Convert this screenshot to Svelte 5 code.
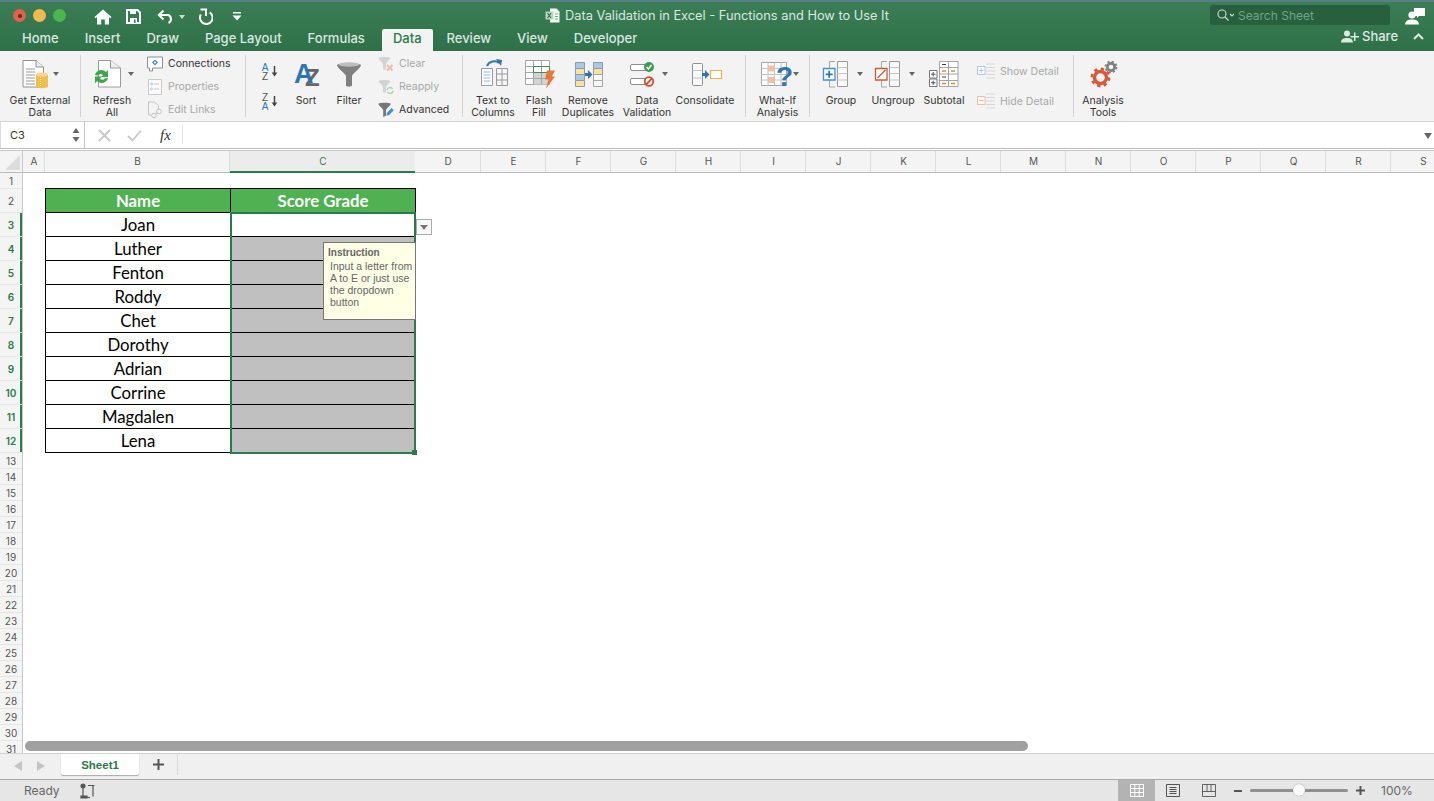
<script>
	const tabs = ['Home', 'Insert', 'Draw', 'Page Layout', 'Formulas', 'Data', 'Review', 'View', 'Developer'];
	const columns = ['A', 'B', 'C', 'D', 'E', 'F', 'G', 'H', 'I', 'J', 'K', 'L', 'M', 'N', 'O', 'P', 'Q', 'R', 'S'];
	const names = ['Joan', 'Luther', 'Fenton', 'Roddy', 'Chet', 'Dorothy', 'Adrian', 'Corrine', 'Magdalen', 'Lena'];
	const rows = Array.from({ length: 31 }, (_, i) => i + 1);
</script>

<div class="window">
	<header class="titlebar">
		<div class="title-row">
			<div class="lights">
				<span class="light red"><i></i></span>
				<span class="light orange"></span>
				<span class="light green"></span>
			</div>
			<div class="quick">
				<svg class="q-home" width="18" height="16" viewBox="0 0 18 16" fill="#fff"><path d="M9 .5 17.500 8l-1.200 1.200L15 8.100V15.500h-4.200v-5H7.200v5H3V8.100L1.700 9.200.5 8z"/></svg>
				<svg class="q-save" width="15" height="15" viewBox="0 0 15 15"><path d="M1 1h10.500L14 3.500V14H1z" fill="none" stroke="#fff" stroke-width="2"/><path d="M4 1h6v4H4zM4 9h7v5H4z" fill="#fff"/><path d="M8 10.500h1.500V14H8z" fill="#2f7349"/></svg>
				<svg class="q-undo" width="18" height="15" viewBox="0 0 18 15" fill="none" stroke="#fff" stroke-width="2"><path d="M6.500 1.500 1.800 6l4.700 4.500M2 6h9.500a4.500 4.500 0 0 1 0 8"/></svg>
				<span class="q-caret"></span>
				<svg class="q-redo" width="16" height="17" viewBox="0 0 16 17" fill="none" stroke="#fff" stroke-width="2"><path d="M3.800 6.500a6.300 6.300 0 1 0 8.900-2.200"/><path d="M3.500 1.500h5.500v6.500"/></svg>
				<svg class="q-more" width="10" height="9" viewBox="0 0 10 9" fill="#fff"><path d="M1 0h8v1.500H1zM.5 3.500h9L5 8.500z"/></svg>
			</div>
			<div class="doc-title">
				<svg width="15" height="15" viewBox="0 0 15 15"><path d="M5 .5h6.500L14.500 3.500v11H5z" fill="#f4f8f5"/><path d="M.5 3.500h8v8h-8z" fill="#b9d6c3"/><path d="M2.500 5l3.500 5M6 5l-3.500 5" stroke="#2f7349" stroke-width="1.200"/><path d="M10 6h3M10 8.500h3M10 11h3" stroke="#7ba58a"/></svg>
				<span>Data Validation in Excel - Functions and How to Use It</span>
			</div>
			<div class="search">
				<svg width="17" height="12" viewBox="0 0 17 12" fill="none" stroke="#cfe0d5" stroke-width="1.100"><circle cx="5" cy="5" r="4"/><path d="m8 8 3.500 3.500M13 5l2 2 2-2"/></svg>
				<span>Search Sheet</span>
			</div>
			<svg class="profile" width="20" height="19" viewBox="0 0 20 19" fill="#fff"><path d="M9 2h11v8h-6l-2 2v-2H9z"/><circle cx="7" cy="9" r="3.600"/><path d="M0 18.500c.5-4 3-5 7-5s6.500 1 7 5z"/></svg>
		</div>
		<nav class="tab-row">
			{#each tabs as tab}
				<span class="tab" class:active={tab === 'Data'}>{tab}</span>
			{/each}
			<div class="share">
				<svg width="18" height="13" viewBox="0 0 18 13" fill="#dfe9e3"><circle cx="6" cy="3.500" r="3"/><path d="M0 12.500c.3-3.500 2.500-4.500 6-4.500s5.700 1 6 4.500zM13 2.500h1.500V6H18v1.500h-3.500V11H13V7.500H9.500V6H13z"/></svg>
				<span>Share</span>
				<svg class="chev" width="11" height="7" viewBox="0 0 11 7" fill="none" stroke="#dfe9e3" stroke-width="2"><path d="m1 6 4.500-4.500L10 6"/></svg>
			</div>
		</nav>
	</header>

	<section class="ribbon">
		<div class="group g1">
			<div class="tool w80">
				<svg width="40" height="32" viewBox="0 0 40 32"><path d="M3 2.500h13L23.500 9v20H3z" fill="#fff" stroke="#8f8f8f"/><path d="M16 2.500V9h7.500" fill="#eee" stroke="#8f8f8f"/><path d="M6 11h9M6 14h9M6 17h9M6 20h9M6 23h9M6 26h9" stroke="#9a9a9a"/><path d="M16 16.500h12v12.500c-2 1.500-10 1.500-12 0z" fill="#f3bd4c"/><ellipse cx="22" cy="16.500" rx="6" ry="2" fill="#f9d88e"/><path d="M20.500 19v9" stroke="#fdeec8" stroke-dasharray="1 1"/><path d="m33 14 3 4 3-4z" fill="#666"/></svg>
				<span class="lbl">Get External<br />Data</span>
			</div>
		</div>

		<div class="group g2">
			<div class="tool w62">
				<svg width="50" height="32" viewBox="0 0 50 32"><path d="M11.500 2.500h12L33.500 10v19h-22z" fill="#fff" stroke="#9a9a9a"/><path d="M23.500 2.500V10h10" fill="#f0f0f0" stroke="#9a9a9a"/><path d="M8 17a6.500 6.500 0 0 1 11-3l2-2v7h-7l2-2a3.500 3.500 0 0 0-5 .5z" fill="#3fa54a"/><path d="M21 20a6.500 6.500 0 0 1-11 3l-2 2.500V18.500h7l-2 2.200a3.500 3.500 0 0 0 5-.5z" fill="#3fa54a"/><path d="m41 14 3 4 3-4z" fill="#666"/></svg>
				<span class="lbl">Refresh<br />All</span>
			</div>
			<div class="list">
				<div class="item">
					<svg width="16" height="16" viewBox="0 0 16 16"><path d="M.5 1h15v11H5.500v3h-3v-3H.5z" fill="#fff" stroke="#8f8f8f"/><path d="m8 3.500 3 3-3 3-3-3z" fill="#3f8ed6"/><circle cx="8" cy="6.500" r="1" fill="#fff"/></svg>
					<span>Connections</span>
				</div>
				<div class="item off">
					<svg width="16" height="16" viewBox="0 0 16 16" fill="none" stroke="#c9c9c9"><path d="M1.500.5h13v15h-13z" fill="#fafafa"/><path d="M7 5h5M7 10h5"/><circle cx="4.500" cy="5" r="1" stroke="#a9c8e6"/><circle cx="4.500" cy="10" r="1"/></svg>
					<span>Properties</span>
				</div>
				<div class="item off">
					<svg width="16" height="18" viewBox="0 0 16 18" fill="none" stroke="#c4c4c4"><path d="M1.500 1h6l4 4v4M1.500 1v13h3"/><circle cx="7" cy="14.500" r="2.300"/><circle cx="12" cy="10.500" r="2.300"/><path d="m8.500 13 2-1.500"/></svg>
					<span>Edit Links</span>
				</div>
			</div>
		</div>

		<div class="group g3">
			<div class="az">
				<svg width="24" height="22" viewBox="0 0 24 22"><text x="9" y="10" class="az-a">A</text><text x="9" y="19" class="az-z">Z</text><path d="M18.500 5v8" stroke="#444" stroke-width="1.500"/><path d="m15.700 11.500 2.800 4 2.800-4z" fill="#444"/></svg>
				<svg width="24" height="22" viewBox="0 0 24 22"><text x="9" y="10" class="az-z">Z</text><text x="9" y="19" class="az-a">A</text><path d="M18.500 5v8" stroke="#444" stroke-width="1.500"/><path d="m15.700 11.500 2.800 4 2.800-4z" fill="#444"/></svg>
			</div>
			<div class="tool w44">
				<svg width="40" height="32" viewBox="0 0 40 32"><text x="19" y="28" class="sort-z">Z</text><text x="8" y="25" class="sort-a">A</text></svg>
				<span class="lbl">Sort</span>
			</div>
			<div class="tool w42">
				<svg width="40" height="32" viewBox="0 0 40 32"><path d="M8 7c0-2.500 24-2.500 24 0 0 3-8 8-9 11v9.500c0 1.500-6 1.500-6 0V18c-1-3-9-8-9-11z" fill="#808080"/><ellipse cx="20" cy="6.500" rx="10.500" ry="2.200" fill="#bdbdbd"/></svg>
				<span class="lbl">Filter</span>
			</div>
			<div class="list l3">
				<div class="item off">
					<svg width="16" height="16" viewBox="0 0 16 16"><path d="M.5 2c0-1.500 12-1.500 12 0 0 1.500-4 4-4.500 6v5.500h-3V8C4.500 6 .5 3.500.5 2z" fill="#d3d3d3"/><path d="m9 9 5.500 5.500M14.500 9 9 14.500" stroke="#eeb9a8" stroke-width="1.800"/></svg>
					<span>Clear</span>
				</div>
				<div class="item off">
					<svg width="16" height="16" viewBox="0 0 16 16"><path d="M.5 2c0-1.500 12-1.500 12 0 0 1.500-4 4-4.500 6v5.500h-3V8C4.500 6 .5 3.500.5 2z" fill="#d3d3d3"/><path d="M9 11a3 3 0 0 1 5.500-1M15 12a3 3 0 0 1-5.500 1" fill="none" stroke="#a5d3ab" stroke-width="1.400"/></svg>
					<span>Reapply</span>
				</div>
				<div class="item">
					<svg width="16" height="18" viewBox="0 0 17 18"><path d="M.5 2.500c0-1.500 13-1.500 13 0 0 1.500-4.500 4.500-5 6.500v6l-3 1.500V9C5 7 .5 4 .5 2.500z" fill="#777"/><path d="m9 15 .5-3 5-5 2.300 2.300-5 5z" fill="#3f8ed6"/></svg>
					<span>Advanced</span>
				</div>
			</div>
		</div>

		<div class="group g4">
			<div class="tool w60">
				<svg width="40" height="32" viewBox="0 0 40 32"><path d="M8.500 10.500h11v17h-11z" fill="#fff" stroke="#9a9a9a"/><path d="M10.500 14h7M10.500 17h7M10.500 20h7M10.500 23h7" stroke="#8fbbe6"/><path d="M23.500 10.500h11v17h-11zM23.500 16h11M23.500 22h11M29 10.500v17" fill="#f6f6f6" stroke="#9a9a9a"/><path d="M14 8c2-5 9-6 12-3" fill="none" stroke="#2e75b6" stroke-width="2"/><path d="m23 1 6 1-1 6z" fill="#2e75b6"/></svg>
				<span class="lbl">Text to<br />Columns</span>
			</div>
			<div class="tool w32">
				<svg width="40" height="32" viewBox="0 0 40 32"><path d="M6.500 2.500h24v24h-24z" fill="#fff" stroke="#a5a5a5"/><path d="M14.500 14.500h16v12h-16z" fill="#d4d4d4"/><path d="M6.500 8.500h24M6.500 14.500h24M6.500 20.500h24M14.500 2.500v24M22.500 2.500v24" stroke="#a5a5a5"/><path d="M14.500 8.500h16v6h-16z" fill="none" stroke="#3f8f58"/><path d="m28 12.500h8l-3 6h3l-9 12 2.500-9H26z" fill="#e8763a"/></svg>
				<span class="lbl">Flash<br />Fill</span>
			</div>
			<div class="tool w66">
				<svg width="40" height="32" viewBox="0 0 40 32"><path d="M7.500 4.500h9v6h-9z" fill="#a6c8ea" stroke="#8f9aa5"/><path d="M7.500 10.500h9v6h-9z" fill="#fbe1a0" stroke="#8f9aa5"/><path d="M7.500 16.500h9v6h-9z" fill="#a6c8ea" stroke="#8f9aa5"/><path d="M7.500 22.500h9v6h-9z" fill="#fbe1a0" stroke="#8f9aa5"/><path d="M25.500 4.500h9v6h-9z" fill="#a6c8ea" stroke="#8f9aa5"/><path d="M25.500 10.500h9v6h-9z" fill="#fbe1a0" stroke="#8f9aa5"/><path d="M25.500 16.500h9v6h-9zM25.500 22.500h9v6h-9z" fill="#f8f8f8" stroke="#a5a5a5"/><path d="M17 15h3v-3l4.500 4.500L20 21v-3h-3z" fill="#2e75b6"/></svg>
				<span class="lbl">Remove<br />Duplicates</span>
			</div>
			<div class="tool w52">
				<svg width="50" height="32" viewBox="0 0 50 32"><rect x="8.500" y="6.500" width="17" height="6" rx="1.500" fill="#fff" stroke="#8f8f8f"/><rect x="8.500" y="20.500" width="17" height="6" rx="1.500" fill="#fff" stroke="#8f8f8f"/><circle cx="27" cy="9" r="5" fill="#3c9a52"/><path d="m24.500 9 2 2 3-4" fill="none" stroke="#fff" stroke-width="1.400"/><circle cx="27" cy="23.500" r="4.300" fill="#fff" stroke="#c9512e" stroke-width="1.800"/><path d="m24 26.500 6-6" stroke="#c9512e" stroke-width="1.800"/><path d="m40 14 3 4 3-4z" fill="#666"/></svg>
				<span class="lbl">Data<br />Validation</span>
			</div>
			<div class="tool w64">
				<svg width="40" height="32" viewBox="0 0 40 32"><rect x="7.500" y="5.500" width="10" height="22" rx="1" fill="#fafafa" stroke="#8f8f8f"/><path d="M7.500 12.500h10M7.500 20h10" stroke="#c4c4c4"/><path d="M17 15h3v-3l4.500 4.500L20 21v-3h-3z" fill="#2e75b6"/><path d="M25.500 12.500h11v8h-11z" fill="#fffdf5" stroke="#eeb04a" stroke-width="1.200"/></svg>
				<span class="lbl">Consolidate</span>
			</div>
		</div>

		<div class="group g5">
			<div class="tool w63">
				<svg width="50" height="32" viewBox="0 0 50 32"><path d="M8.500 4.500h25v23h-25z" fill="#fff" stroke="#a5a5a5"/><path d="M8.500 10.500h25M8.500 16.500h25M8.500 22h25M15 4.500v23M21.500 4.500v23M28 4.500v23" stroke="#c4c4c4"/><path d="M15 7.500h6.500v6H15zM15 19h6.500v6H15z" fill="#f2bfa2"/><text x="23" y="28" class="qmark">?</text><path d="m40 14 3 4 3-4z" fill="#666"/></svg>
				<span class="lbl">What-If<br />Analysis</span>
			</div>
		</div>

		<div class="group g6">
			<div class="tool w62">
				<svg width="50" height="32" viewBox="0 0 50 32"><path d="M19 3.500h-5.500v7M13.500 22v7H19" fill="none" stroke="#a5a5a5"/><path d="M21.500 3.500h10v25h-10z" fill="#fafafa" stroke="#9a9a9a"/><path d="M21.500 9.500h10M21.500 15.500h10M21.500 22h10" stroke="#c4c4c4"/><path d="M7.500 10.500h11.500v11.500H7.500z" fill="#fff" stroke="#3f8ed6" stroke-width="1.300"/><path d="M13.200 12.800v7M9.700 16.300h7" stroke="#2e75b6" stroke-width="1.800"/><path d="m41 14 3 4 3-4z" fill="#666"/></svg>
				<span class="lbl">Group</span>
			</div>
			<div class="tool w42">
				<svg width="50" height="32" viewBox="0 0 50 32"><path d="M19 3.500h-5.500v7M13.500 22v7H19" fill="none" stroke="#a5a5a5"/><path d="M21.500 3.500h10v25h-10z" fill="#fafafa" stroke="#9a9a9a"/><path d="M21.500 9.500h10M21.500 15.500h10M21.500 22h10" stroke="#c4c4c4"/><path d="M7.500 10.500h11.500v11.500H7.500z" fill="#fff" stroke="#cb5a3c" stroke-width="1.300"/><path d="m9.500 20 8-8" stroke="#cb5a3c" stroke-width="1.300"/><path d="m41 14 3 4 3-4z" fill="#666"/></svg>
				<span class="lbl">Ungroup</span>
			</div>
			<div class="tool w60">
				<svg width="40" height="32" viewBox="0 0 40 32"><path d="M15.500 3.500h18.500v25H15.500zM15.500 9.500H34M15.500 16H34M15.500 22.500H34M24.500 3.500v25" fill="#fff" stroke="#a5a5a5"/><path d="M18 6.500h4M18 19h4" stroke="#444"/><path d="M18 13h4M27 13h4M18 25.500h4M27 25.500h4" stroke="#e8843a" stroke-width="1.300"/><path d="M5.500 12.500h7.500v7.500H5.500zM5.500 21h7.500v7.500H5.500z" fill="#fff" stroke="#777"/><path d="M9.200 14v4.500M7 16.200h4.500M9.200 22.500V27M7 24.700h4.500" stroke="#555"/></svg>
				<span class="lbl">Subtotal</span>
			</div>
			<div class="list details">
				<div class="item off">
					<svg width="19" height="16" viewBox="0 0 19 16"><path d="M.5 3.500h7.500v8H.5z" fill="#fff" stroke="#a6c8ea"/><path d="M4.200 5.300v4.500M2 7.500h4.500" stroke="#a6c8ea"/><path d="M9 1h9M9 4.500h9M9 8h9M9 11.500h9M9 15h9" stroke="#d6d6d6"/></svg>
					<span>Show Detail</span>
				</div>
				<div class="item off">
					<svg width="19" height="16" viewBox="0 0 19 16"><path d="M.5 3.500h7.500v8H.5z" fill="#fff" stroke="#efb9a2"/><path d="M2 7.500h4.500" stroke="#efb9a2"/><path d="M9 1h9M9 4.500h9M9 8h9M9 11.500h9M9 15h9" stroke="#d6d6d6"/></svg>
					<span>Hide Detail</span>
				</div>
			</div>
		</div>

		<div class="group g7">
			<div class="tool w58">
				<svg width="40" height="32" viewBox="0 0 40 32" fill="none"><circle cx="28" cy="9" r="3.600" stroke="#808080" stroke-width="2.600"/><circle cx="28" cy="9" r="5.400" stroke="#808080" stroke-width="2" stroke-dasharray="2.100 2.140"/><circle cx="17.500" cy="19.500" r="6" stroke="#d9583a" stroke-width="3.400"/><circle cx="17.500" cy="19.500" r="8.600" stroke="#d9583a" stroke-width="2.600" stroke-dasharray="3.350 3.400"/></svg>
				<span class="lbl">Analysis<br />Tools</span>
			</div>
		</div>
	</section>

	<section class="formula-bar">
		<div class="name-box">
			<span>C3</span>
			<svg width="8" height="16" viewBox="0 0 8 16" fill="#666"><path d="m4 1 3.500 5H.5zM4 15 .5 10h7z"/></svg>
		</div>
		<div class="fx-buttons">
			<svg width="13" height="13" viewBox="0 0 13 13" fill="none" stroke="#c8c8c8" stroke-width="1.800"><path d="m1 1 11 11M12 1 1 12"/></svg>
			<svg width="15" height="13" viewBox="0 0 15 13" fill="none" stroke="#c8c8c8" stroke-width="1.800"><path d="m1 7 4.500 4.500L14 1.500"/></svg>
			<span class="fx">fx</span>
		</div>
		<div class="formula-input"></div>
		<svg class="expand" width="8" height="6" viewBox="0 0 8 6" fill="#666"><path d="M0 0h8L4 6z"/></svg>
	</section>

	<section class="col-heads">
		<div class="corner"><span></span></div>
		{#each columns as col}
			<div class="col-head col-{col}" class:sel={col === 'C'}>{col}</div>
		{/each}
	</section>

	<section class="sheet">
		<div class="row-heads">
			{#each rows as r}
				<div class="row-head" class:tall={r >= 2 && r <= 12} class:sel={r >= 3 && r <= 12}>{r}</div>
			{/each}
		</div>
		<div class="canvas">
			<div class="table">
				<div class="cell head">Name</div>
				<div class="cell head">Score Grade</div>
				{#each names as name, i}
					<div class="cell">{name}</div>
					<div class="cell grade" class:active={i === 0}></div>
				{/each}
				<div class="selection"><span class="handle"></span></div>
				<div class="dropdown"><i></i></div>
				<div class="tip">
					<strong>Instruction</strong>
					<p>Input a letter from<br />A to E or just use<br />the dropdown<br />button</p>
				</div>
			</div>
		</div>
		<div class="scrollbar"></div>
	</section>

	<section class="sheet-tabs">
		<span class="nav-arrow left"></span>
		<span class="nav-arrow right"></span>
		<div class="sheet-tab">Sheet1</div>
		<div class="add-sheet">
			<svg width="11" height="11" viewBox="0 0 11 11" fill="#555"><path d="M4.500 0h2v4.500H11v2H6.500V11h-2V6.500H0v-2h4.500z"/></svg>
		</div>
	</section>

	<footer class="status">
		<span class="ready">Ready</span>
		<svg class="macro" width="16" height="16" viewBox="0 0 16 16" fill="none" stroke="#555" stroke-width="1.200"><circle cx="3" cy="3" r="2" fill="#555"/><path d="M3 5v8M8 2.500h6.500M13 2.500v11M1 14.500h9"/><path d="M1 13h6v2H1z" fill="#555"/></svg>
		<div class="views">
			<div class="view active">
				<svg width="14" height="13" viewBox="0 0 14 13" fill="none" stroke="#fff"><path d="M.5.500h13v12H.5zM.5 4.500h13M.5 8.500h13M4.800.5v12M9.200.5v12"/></svg>
			</div>
			<div class="view">
				<svg width="14" height="13" viewBox="0 0 14 13" fill="none" stroke="#555"><path d="M.5.500h13v12H.5zM3.500 3.500h7M3.500 5.500h7M3.500 7.500h7M3.500 9.500h7"/></svg>
			</div>
			<div class="view">
				<svg width="14" height="13" viewBox="0 0 14 13" fill="none" stroke="#555"><path d="M.5.500h13v12H.5zM.5 7.500h13M5 .5v7M9 .5v7" stroke-width=".9"/></svg>
			</div>
		</div>
		<div class="zoom">
			<span class="minus"></span>
			<div class="track"><span class="thumb"></span></div>
			<svg width="9" height="9" viewBox="0 0 9 9" fill="#555"><path d="M3.500 0h2v3.500H9v2H5.500V9h-2V5.500H0v-2h3.500z"/></svg>
			<span class="pct">100%</span>
		</div>
	</footer>
</div>

<style>
	:global(body) {
		margin: 0;
		background: #fff;
	}

	.window {
		width: 1434px;
		height: 801px;
		display: flex;
		flex-direction: column;
		overflow: hidden;
		font-family: 'Inter', 'Liberation Sans', sans-serif;
		color: #333;
	}

	/* Title bar */
	.titlebar {
		height: 51px;
		flex: none;
		box-sizing: border-box;
		border-top: 2px solid #5b7f8a;
		background: linear-gradient(#3b7e56, #2e7048);
		color: #fff;
	}

	.title-row {
		height: 27px;
		display: flex;
		align-items: flex-start;
		position: relative;
	}

	.lights {
		display: flex;
		gap: 7px;
		padding: 7px 0 0 13px;
	}

	.light {
		width: 13px;
		height: 13px;
		border-radius: 50%;
		display: flex;
		align-items: center;
		justify-content: center;
	}

	.light.red {
		background: #e2604f;
	}

	.light.red i {
		width: 4px;
		height: 4px;
		border-radius: 50%;
		background: #7d1f14;
	}

	.light.orange {
		background: #f4b94c;
	}

	.light.green {
		background: #4cb64c;
	}

	.quick {
		display: flex;
		align-items: center;
		height: 17px;
		padding-top: 6px;
		margin-left: 28px;
	}

	.q-caret {
		width: 0;
		height: 0;
		margin: 0 12px 0 4px;
		border: 3px solid transparent;
		border-top: 4px solid #cfe0d5;
		border-bottom: 0;
	}

	.q-save {
		margin-left: 14px;
	}

	.q-undo {
		margin-left: 16px;
	}

	.q-more {
		margin-left: 19px;
	}

	.doc-title {
		display: flex;
		align-items: center;
		gap: 5px;
		font-size: 12.8px;
		color: #dbe8e0;
		height: 27px;
		padding-bottom: 1px;
		box-sizing: border-box;
		margin-left: 303px;
	}

	.search {
		position: absolute;
		left: 1210px;
		top: 3px;
		width: 180px;
		height: 20px;
		box-sizing: border-box;
		padding-left: 7px;
		background: #28603f;
		border-radius: 3px;
		display: flex;
		align-items: center;
		gap: 4px;
		font-size: 12px;
		color: #6fa585;
	}

	.profile {
		position: absolute;
		left: 1405px;
		top: 4px;
	}

	.tab-row {
		height: 22px;
		display: flex;
		padding-left: 22px;
		font-size: 13px;
		position: relative;
	}

	.tab {
		color: #dbe8e0;
		margin-right: 26px;
		line-height: 18px;
		font-weight: 500;
	}

	.tab.active {
		background: #f3f3f3;
		color: #2a7a4b;
		margin: 0 14px 0 -9px;
		padding: 0 11px;
		border-radius: 2px 2px 0 0;
		line-height: 18px;
		height: 22px;
	}

	.share {
		position: absolute;
		left: 1341px;
		top: -1px;
		height: 16px;
		display: flex;
		align-items: center;
		gap: 3px;
		font-size: 13px;
		color: #dfe9e3;
		font-weight: 500;
	}

	.chev {
		margin-left: 12px;
	}

	/* Ribbon */
	.ribbon {
		height: 71px;
		flex: none;
		box-sizing: border-box;
		background: #f3f3f3;
		border-bottom: 1px solid #d2d2d2;
		display: flex;
		align-items: flex-start;
		padding-top: 4px;
	}

	.group {
		height: 62px;
		flex: none;
		display: flex;
		box-sizing: border-box;
		border-right: 1px solid #d2d2d2;
	}

	.g1 { width: 81px; }
	.g2 { width: 165px; }
	.g3 { width: 217px; }
	.g4 { width: 283px; }
	.g5 { width: 64px; }
	.g6 { width: 264px; }
	.g7 { width: 100px; border-right: 0; }

	.tool {
		flex: none;
		display: flex;
		flex-direction: column;
		align-items: center;
		padding-top: 3px;
	}

	.tool svg {
		flex: none;
		margin-bottom: 5px;
		overflow: visible;
	}

	.w32 { width: 32px; }
	.w42 { width: 42px; }
	.w44 { width: 44px; }
	.w52 { width: 52px; }
	.w58 { width: 58px; }
	.w60 { width: 60px; }
	.w62 { width: 62px; }
	.w63 { width: 63px; }
	.w64 { width: 64px; }
	.w66 { width: 66px; }
	.w80 { width: 80px; }

	.lbl {
		font-size: 10.5px;
		line-height: 12px;
		text-align: center;
		white-space: nowrap;
		color: #333;
	}

	.list {
		display: flex;
		flex-direction: column;
		margin-left: 4px;
		margin-top: -3px;
	}

	.l3 {
		margin-left: 8px;
	}

	.item {
		height: 23px;
		flex: none;
		display: flex;
		align-items: center;
		gap: 5px;
		font-size: 10.5px;
		color: #333;
		white-space: nowrap;
	}

	.item svg {
		flex: none;
		overflow: visible;
	}

	.item.off {
		color: #a8a8a8;
	}

	.details {
		margin: 1px 0 0 3px;
	}

	.details .item {
		height: 30px;
		gap: 4px;
	}

	.az {
		width: 24px;
		margin: 6px 4px 0 10px;
		display: flex;
		flex-direction: column;
		gap: 8px;
	}

	.az-a,
	.az-z {
		font-size: 10px;
		text-anchor: middle;
		font-family: 'Liberation Sans', sans-serif;
	}

	.az-a {
		fill: #2e75b6;
	}

	.az-z {
		fill: #555;
	}

	.sort-a {
		font: bold 27px 'Liberation Sans', sans-serif;
		fill: #2e75b6;
	}

	.sort-z {
		font: bold 24px 'Liberation Sans', sans-serif;
		fill: #666;
	}

	.qmark {
		font: bold 28px 'Liberation Sans', sans-serif;
		fill: #2e75b6;
	}

	/* Formula bar */
	.formula-bar {
		height: 26px;
		flex: none;
		display: flex;
		align-items: stretch;
		background: #fff;
		position: relative;
		border-bottom: 1px solid #bdbdbd;
	}

	.name-box {
		width: 85px;
		box-sizing: border-box;
		border-right: 1px solid #c4c4c4;
		border-left: 1px solid #ddd;
		display: flex;
		align-items: center;
		justify-content: space-between;
		padding: 0 4px 0 9px;
		font-size: 11px;
	}

	.fx-buttons {
		width: 98px;
		box-sizing: border-box;
		border-right: 1px solid #e2e2e2;
		margin: 4px 0;
		display: flex;
		align-items: center;
		padding-left: 13px;
		gap: 16px;
	}

	.fx {
		font: italic 15px 'Liberation Serif', serif;
		color: #333;
		margin-left: 2px;
	}

	.formula-input {
		flex: 1;
	}

	.expand {
		position: absolute;
		right: 2px;
		top: 11px;
	}

	/* Column headers */
	.col-heads {
		height: 23px;
		flex: none;
		display: flex;
		box-sizing: border-box;
		margin-top: 1px;
		background: #f4f4f4;
		border-top: 1px solid #c8c8c8;
		border-bottom: 1px solid #bbb;
	}

	.corner {
		width: 23px;
		flex: none;
		box-sizing: border-box;
		border-right: 1px solid #c8c8c8;
		position: relative;
	}

	.corner span {
		position: absolute;
		right: 2px;
		bottom: 2px;
		width: 0;
		height: 0;
		border-left: 15px solid transparent;
		border-bottom: 15px solid #dcdcdc;
	}

	.col-head {
		width: 65px;
		flex: none;
		box-sizing: border-box;
		border-right: 1px solid #dcdcdc;
		padding-left: 1px;
		font-size: 10px;
		color: #555;
		text-align: center;
		line-height: 21px;
	}

	.col-A { width: 22px; }
	.col-B { width: 185px; }
	.col-C { width: 185px; }
	.col-D { width: 66px; }

	.col-head.sel {
		background: #ececec;
		color: #2a7a4b;
		height: 22px;
		border-bottom: 2px solid #2a7a4b;
		border-right: 0;
	}

	/* Sheet */
	.sheet {
		flex: 1;
		display: flex;
		overflow: hidden;
		position: relative;
		background: #fff;
	}

	.row-heads {
		width: 23px;
		flex: none;
		box-sizing: border-box;
		background: #f4f4f4;
		border-right: 1px solid #c8c8c8;
	}

	.row-head {
		height: 16px;
		font-size: 10px;
		line-height: 16px;
		text-align: center;
		color: #555;
		box-sizing: border-box;
		border-bottom: 1px solid #e6e6e6;
	}

	.row-head.tall {
		height: 24px;
		line-height: 24px;
	}

	.row-head.sel {
		color: #2a7a4b;
		font-weight: 600;
		box-shadow: inset -2px 0 0 #2a7a4b;
	}

	.canvas {
		flex: 1;
	}

	.table {
		position: relative;
		display: grid;
		grid-template-columns: 185px 185px;
		grid-auto-rows: 24px;
		width: 371px;
		box-sizing: border-box;
		margin: 15px 0 0 22px;
		border-top: 1px solid #000;
		border-left: 1px solid #000;
	}

	.cell {
		box-sizing: border-box;
		border-right: 1px solid #000;
		border-bottom: 1px solid #000;
		font-family: 'Lato', sans-serif;
		font-size: 16.8px;
		line-height: 23px;
		text-align: center;
		color: #000;
	}

	.cell.head {
		background: #4fb152;
		color: #fff;
		font-weight: 700;
	}

	.cell.grade {
		background: #c0c0c0;
	}

	.cell.grade.active {
		background: #fff;
	}

	.selection {
		position: absolute;
		left: 184px;
		top: 23px;
		width: 186px;
		height: 242px;
		box-sizing: border-box;
		border: 2px solid #2a7a4b;
		pointer-events: none;
	}

	.handle {
		position: absolute;
		right: -3px;
		bottom: -3px;
		width: 5px;
		height: 5px;
		background: #2a7a4b;
	}

	.dropdown {
		position: absolute;
		left: 370px;
		top: 30px;
		width: 16px;
		height: 16px;
		box-sizing: border-box;
		background: #f8f8f8;
		border: 1px solid #aaa;
		display: flex;
		align-items: center;
		justify-content: center;
	}

	.dropdown i {
		width: 0;
		height: 0;
		border: 4px solid transparent;
		border-top: 5px solid #777;
		border-bottom: 0;
	}

	.tip {
		position: absolute;
		left: 277px;
		top: 53px;
		width: 93px;
		height: 78px;
		box-sizing: border-box;
		background: #ffffe6;
		border: 1px solid #777;
		padding: 4px 0 0 4px;
		font-family: 'Liberation Sans', sans-serif;
		font-size: 10.5px;
		color: #666;
	}

	.tip strong {
		display: block;
		line-height: 12px;
		font-size: 10px;
	}

	.tip p {
		margin: 1px 0 0 2px;
		line-height: 12px;
		white-space: nowrap;
	}

	.scrollbar {
		position: absolute;
		left: 25px;
		top: 568px;
		width: 1003px;
		height: 10px;
		border-radius: 5px;
		background: #a0a0a0;
	}

	/* Sheet tabs */
	.sheet-tabs {
		height: 26px;
		flex: none;
		box-sizing: border-box;
		background: #f0f0f0;
		border-top: 1px solid #d2d2d2;
		display: flex;
		align-items: flex-start;
		position: relative;
		padding-left: 61px;
	}

	.nav-arrow {
		position: absolute;
		top: 7px;
		width: 0;
		height: 0;
		border: 5px solid transparent;
	}

	.nav-arrow.left {
		left: 14px;
		border-right: 8px solid #c4c4c4;
		border-left: 0;
	}

	.nav-arrow.right {
		left: 37px;
		border-left: 8px solid #c4c4c4;
		border-right: 0;
	}

	.sheet-tab {
		width: 78px;
		height: 21px;
		background: #fff;
		border-radius: 0 0 2px 2px;
		box-shadow: 0 1px 1px #aaa;
		font-family: 'Liberation Sans', sans-serif;
		font-size: 11.5px;
		font-weight: 700;
		color: #2a7a4b;
		text-align: center;
		line-height: 22px;
	}

	.add-sheet {
		width: 39px;
		height: 21px;
		box-sizing: border-box;
		border-right: 1px solid #d8d8d8;
		display: flex;
		align-items: center;
		justify-content: center;
	}

	/* Status bar */
	.status {
		height: 22px;
		flex: none;
		box-sizing: border-box;
		background: #e6e6e6;
		border-top: 1px solid #a9a9a9;
		display: flex;
		align-items: center;
		font-size: 12px;
		color: #666;
		padding-left: 24px;
	}

	.macro {
		margin-left: 20px;
	}

	.views {
		display: flex;
		align-self: stretch;
		margin-left: auto;
	}

	.view {
		width: 36px;
		display: flex;
		align-items: center;
		justify-content: center;
	}

	.view.active {
		width: 37px;
		background: #b3b3b3;
	}

	.zoom {
		display: flex;
		align-items: center;
		margin-left: 7px;
		width: 200px;
	}

	.minus {
		width: 8px;
		height: 2px;
		background: #555;
	}

	.track {
		position: relative;
		width: 98px;
		height: 3px;
		border-radius: 2px;
		background: #909090;
		margin: 0 8px;
	}

	.thumb {
		position: absolute;
		left: 43px;
		top: -5px;
		width: 12px;
		height: 12px;
		border-radius: 50%;
		background: #fafafa;
		box-shadow: 0 0 1px #777;
	}

	.pct {
		margin-left: 16px;
	}
</style>
